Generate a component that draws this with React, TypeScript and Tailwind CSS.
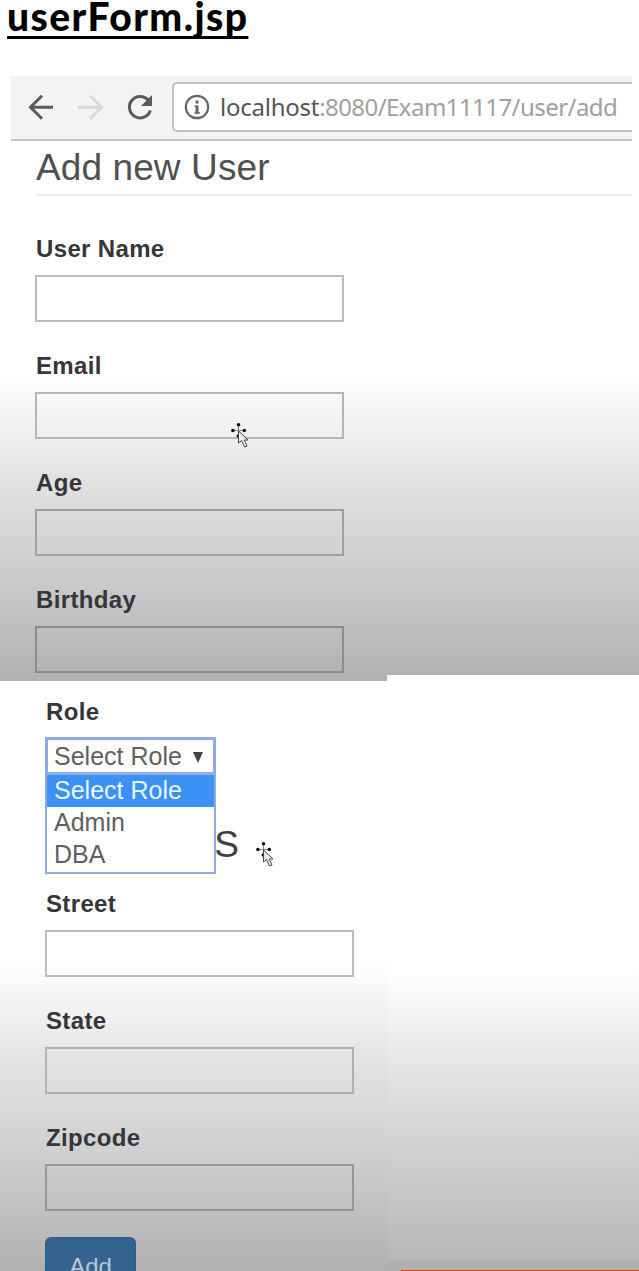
import React from "react";

function Label({ text }: { text: string }) {
  return (
    <label className="ml-px block h-[30px] w-fit whitespace-nowrap text-[24px] leading-[30px] font-bold tracking-[0.35px] text-[#35353a]">
      {text}
    </label>
  );
}

function Field({ text, box }: { text: string; box: string }) {
  return (
    <div className="h-[117px]">
      <Label text={text} />
      <input aria-label={text} className={`mt-[11px] block h-[47px] w-[309px] border-2 bg-transparent ${box}`} />
    </div>
  );
}

function MoveCursor({ className }: { className: string }) {
  return (
    <svg viewBox="0 0 20 28" className={`absolute h-[28px] w-[20px] ${className}`}>
      <path d="M7.5 3V15M2 8.5H14" stroke="#888" strokeWidth="1" />
      <g fill="#111">
        <circle cx="7.5" cy="2.8" r="1.8" />
        <circle cx="1.9" cy="8.5" r="1.8" />
        <circle cx="13.3" cy="8.5" r="1.8" />
        <circle cx="7.3" cy="14" r="1.8" />
      </g>
      <path d="M7.5 9V21L10.5 18.5L13.5 25L16 24L13.2 18H17Z" fill="#eee" stroke="#444" strokeWidth="1" />
    </svg>
  );
}

function Toolbar() {
  return (
    <div className="ml-[11px] flex h-[65px] w-[621px] items-start border-b-2 border-[#c4c4c4] bg-[#f3f3f3]">
      <svg viewBox="0 0 161 62" className="h-[62px] w-[161px] shrink-0" fill="none" strokeWidth="3">
        <path d="M42 31.3H19M31 19.8L19.5 31.3L31 42.8" stroke="#5a5a5a" />
        <path d="M67 31.3H90M79 19.8L90.5 31.3L79 42.8" stroke="#d9d9d9" />
        <path d="M137.5 24.5A10.7 10.7 0 1 0 139.3 34.5" stroke="#5a5a5a" />
        <path d="M141 19V30H130Z" fill="#5a5a5a" />
      </svg>
      <div className="mt-[6px] flex h-[50px] flex-1 items-center rounded-l-[5px] border-2 border-r-0 border-[#c2c2c2] bg-white">
        <svg viewBox="0 0 26 26" className="ml-[10px] h-[26px] w-[26px] shrink-0" fill="none" stroke="#666">
          <circle cx="13" cy="13" r="11.2" strokeWidth="2.2" />
          <path d="M13 11.5V19.5M13 6.5V9.5" strokeWidth="3" />
          <path d="M10.5 12.2H13M10.5 19H16" strokeWidth="1.4" />
        </svg>
        <div className="ml-[10px] font-['Noto_Sans',sans-serif] text-[24px] tracking-[-0.56px] whitespace-nowrap text-[#a0a0a0]">
          <span className="tracking-[-0.25px] text-[#555]">localhost</span>:8080/Exam11117/user/add
        </div>
      </div>
    </div>
  );
}

export default function App() {
  return (
    <div className="h-[1271px] w-[639px] overflow-hidden bg-white font-['Liberation_Sans',Arial,sans-serif]">
      <section className="relative h-[681px] bg-[linear-gradient(180deg,#fff_0,#fff_375px,#e3e3e3_475px,#ccc_575px,#b1b1b1_681px)]">
        <h1 className="ml-[7px] h-[76px] w-fit font-[Lato,sans-serif] text-[39px] leading-[32px] font-black tracking-[1.45px] whitespace-nowrap text-black underline decoration-[2.5px] underline-offset-[5px] [text-decoration-skip-ink:none]">
          userForm.jsp
        </h1>
        <Toolbar />
        <h2 className="ml-[36px] h-[55px] w-[596px] border-b-2 border-[#ececec] text-[37px] leading-[53px] tracking-[0.1px] whitespace-nowrap text-[#505050]">
          Add new User
        </h2>
        <div className="ml-[35px] pt-[38px]">
          <Field text="User Name" box="border-[#bdbdbd]" />
          <Field text="Email" box="border-[#b5b5b5]" />
          <Field text="Age" box="border-[#a0a0a0]" />
          <Field text="Birthday" box="border-[#8c8c8c]" />
        </div>
        <MoveCursor className="top-[422px] left-[231px]" />
      </section>

      <div className="flex">
        <section className="relative h-[590px] w-[387px] overflow-hidden bg-[linear-gradient(180deg,#fff_0,#fff_281px,#e3e3e3_379px,#cfcfcf_474px,#b0b0b0_590px)] pt-[16px] pl-[45px]">
          <Label text="Role" />
          <div className="mt-[10px] flex h-[38px] w-[171px] items-center border-[3px] border-[#8fabe0] bg-white pt-[2px] pl-[6px] text-[25px] whitespace-nowrap text-[#606060]">
            Select Role
            <svg viewBox="0 0 10 11" className="ml-[11px] h-[11px] w-[10px]"><path d="M0 0H10L5 11Z" fill="#444" /></svg>
          </div>
          <div className="h-[114px]">
            <h2 className="w-[194px] pt-[42px] text-right text-[37px] leading-[56px] text-[#404040]">S</h2>
          </div>
          <Field text="Street" box="border-[#bdbdbd]" />
          <Field text="State" box="border-[#b0b0b0]" />
          <Field text="Zipcode" box="border-[#969696]" />
          <button className="-mt-[3px] block h-[60px] w-[91px] rounded-[6px] border-2 border-[#315f8c] bg-[#35638f] text-[24px] text-[#b9c7d6]">Add</button>
          <div className="absolute top-[92px] left-[45px] h-[101px] w-[171px] border-2 border-[#8fabe0] bg-white text-[25px] leading-[31px] text-[#606060]">
            <div className="h-[32px] bg-[#3d91f5] pl-[7px] text-[#e8f3ff]">Select Role</div>
            <div className="h-[32px] pl-[7px]">Admin</div>
            <div className="h-[32px] pl-[7px]">DBA</div>
          </div>
          <MoveCursor className="top-[160px] left-[256px]" />
        </section>
        <aside className="relative -mt-[6px] flex h-[596px] w-[252px] flex-col">
          <div className="h-[586px] bg-[linear-gradient(180deg,#fff_0,#fff_297px,#e0e0e0_410px,#cdcdcd_490px,#b7b7b7_586px)]" />
          <div className="h-[10px] bg-[#b0b0b0] pt-[9px] pl-[14px]"><div className="h-px bg-[#e8351f]" /></div>
        </aside>
      </div>
    </div>
  );
}
